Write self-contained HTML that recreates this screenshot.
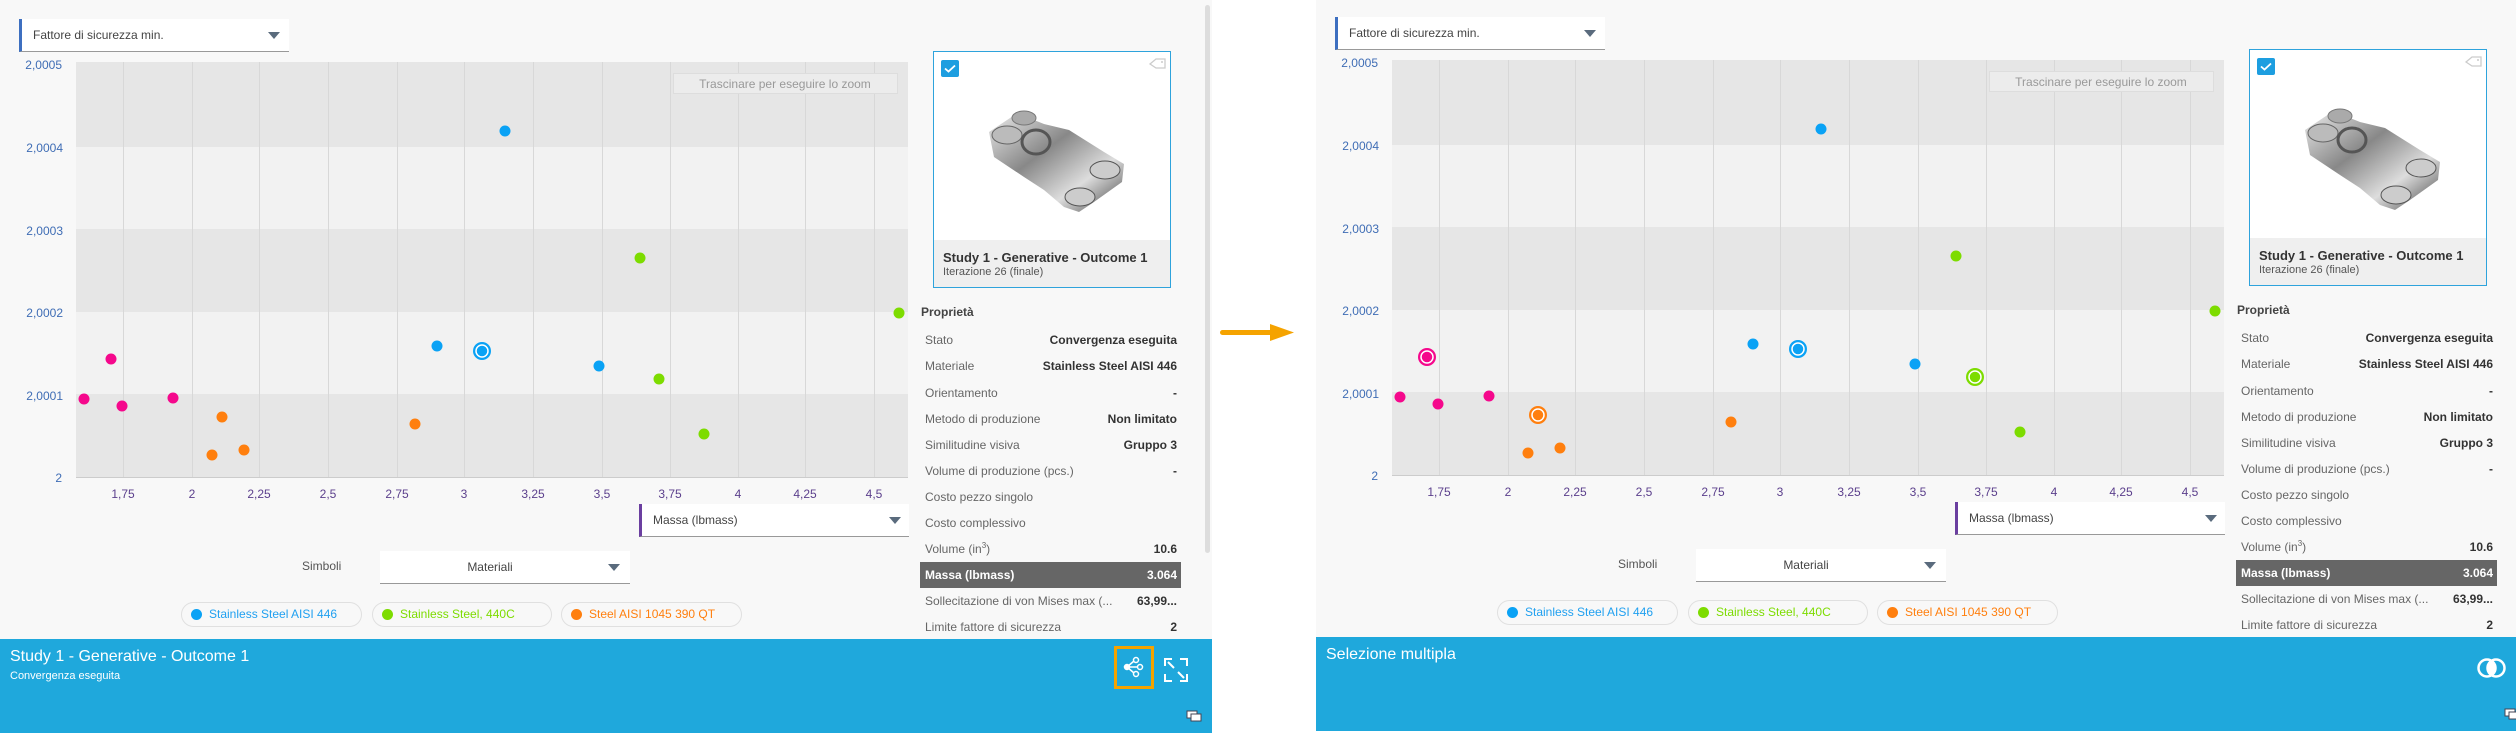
<!DOCTYPE html>
<html><head><meta charset="utf-8"><style>
*{margin:0;padding:0;box-sizing:border-box}
body{width:2516px;height:729px;background:#fff;position:relative;overflow:hidden;font-family:"Liberation Sans",sans-serif}
.panel{position:absolute;width:1212px;height:733px;background:#f8f8f8;overflow:hidden}
.abs{position:absolute}
.dd{position:absolute;background:#fff;border-bottom:1px solid #999;font-size:12px;color:#444}
.tri{position:absolute;width:0;height:0;border-left:6px solid transparent;border-right:6px solid transparent;border-top:7px solid #5a6b7d}
.pill{position:absolute;top:602px;height:25px;border:1px solid #e0e0e0;border-radius:13px;background:#f8f8f8;font-size:12px;line-height:23px;padding-left:27px}
.pill i{position:absolute;left:9px;top:6px;width:11px;height:11px;border-radius:50%}
.row{position:absolute;left:920px;width:261px;height:26px;font-size:12px;line-height:26px;color:#666;padding:0 5px}
.row b{position:absolute;right:4px;top:0;color:#333}
.row sup{font-size:8px;line-height:0;vertical-align:5px}
.footer{position:absolute;left:0;top:639px;width:1212px;height:94px;background:#1fa8dc;color:#fff}
</style></head><body>

<!-- LEFT PANEL -->
<div class="panel" style="left:0;top:0">
  <div class="dd" style="left:19px;top:19px;width:270px;height:33px;border-left:3px solid #3d6fc0;line-height:32px;padding-left:11px">Fattore di sicurezza min.<div class="tri" style="left:246px;top:13px"></div></div>
  <svg class="abs" style="left:0;top:0" width="912" height="510">
    <rect x="76" y="62" width="832" height="85" fill="#e6e6e6"/><rect x="76" y="147" width="832" height="82" fill="#f2f2f2"/><rect x="76" y="229" width="832" height="83" fill="#e6e6e6"/><rect x="76" y="312" width="832" height="82" fill="#f2f2f2"/><rect x="76" y="394" width="832" height="83" fill="#e6e6e6"/>
    <g stroke="#d8d8d8" stroke-width="1"><line x1="123.5" y1="62" x2="123.5" y2="477"/><line x1="192.5" y1="62" x2="192.5" y2="477"/><line x1="259.5" y1="62" x2="259.5" y2="477"/><line x1="328.5" y1="62" x2="328.5" y2="477"/><line x1="397.5" y1="62" x2="397.5" y2="477"/><line x1="464.5" y1="62" x2="464.5" y2="477"/><line x1="533.5" y1="62" x2="533.5" y2="477"/><line x1="602.5" y1="62" x2="602.5" y2="477"/><line x1="670.5" y1="62" x2="670.5" y2="477"/><line x1="738.5" y1="62" x2="738.5" y2="477"/><line x1="805.5" y1="62" x2="805.5" y2="477"/><line x1="874.5" y1="62" x2="874.5" y2="477"/></g>
    <line x1="76" y1="477.5" x2="908" y2="477.5" stroke="#ccc"/>
    <g font-size="12" fill="#3f6db5" text-anchor="end"><text x="62" y="69">2,0005</text><text x="63" y="152">2,0004</text><text x="63" y="235">2,0003</text><text x="63" y="317">2,0002</text><text x="63" y="400">2,0001</text><text x="62" y="482">2</text></g>
    <g font-size="12" fill="#5b3f8c" text-anchor="middle"><text x="123" y="498">1,75</text><text x="192" y="498">2</text><text x="259" y="498">2,25</text><text x="328" y="498">2,5</text><text x="397" y="498">2,75</text><text x="464" y="498">3</text><text x="533" y="498">3,25</text><text x="602" y="498">3,5</text><text x="670" y="498">3,75</text><text x="738" y="498">4</text><text x="805" y="498">4,25</text><text x="874" y="498">4,5</text></g>
    <rect x="673.5" y="73.5" width="224" height="20" fill="#ececec" stroke="#ddd"/><text x="785" y="88" font-size="12" fill="#999" text-anchor="middle">Trascinare per eseguire lo zoom</text>
    <g fill="#0aa2f5"><circle cx="505" cy="131" r="5.5"/><circle cx="437" cy="346" r="5.5"/><circle cx="599" cy="366" r="5.5"/></g>
    <circle cx="482" cy="351" r="9" fill="#0aa2f5"/><circle cx="482" cy="351" r="6" fill="#0aa2f5" stroke="#fff" stroke-width="1.5"/>
    <g fill="#7ddc00"><circle cx="640" cy="258" r="5.5"/><circle cx="659" cy="379" r="5.5"/><circle cx="704" cy="434" r="5.5"/><circle cx="899" cy="313" r="5.5"/></g>
    <g fill="#f5088c"><circle cx="111" cy="359" r="5.5"/><circle cx="84" cy="399" r="5.5"/><circle cx="122" cy="406" r="5.5"/><circle cx="173" cy="398" r="5.5"/></g>
    <g fill="#ff7f0e"><circle cx="222" cy="417" r="5.5"/><circle cx="212" cy="455" r="5.5"/><circle cx="244" cy="450" r="5.5"/><circle cx="415" cy="424" r="5.5"/></g>
  </svg>
  <div class="dd" style="left:639px;top:504px;width:270px;height:33px;border-left:3px solid #6b3fa0;line-height:32px;padding-left:11px">Massa (lbmass)<div class="tri" style="left:247px;top:13px"></div></div>
  <div class="abs" style="left:302px;top:559px;font-size:12px;color:#555">Simboli</div>
  <div class="dd" style="left:380px;top:551px;width:250px;height:33px;line-height:32px;text-align:center;padding-right:30px">Materiali<div class="tri" style="left:228px;top:13px"></div></div>
  <div class="pill" style="left:181px;width:181px;color:#20a0f0"><i style="background:#0aa2f5"></i>Stainless Steel AISI 446</div>
  <div class="pill" style="left:372px;width:180px;color:#7ddc00"><i style="background:#7ddc00"></i>Stainless Steel, 440C</div>
  <div class="pill" style="left:561px;width:181px;color:#ff7f0e"><i style="background:#ff7f0e"></i>Steel AISI 1045 390 QT</div>

  <div class="abs" style="left:933px;top:51px;width:238px;height:237px;border:1px solid #2ea3dc;background:#fff">
    <div class="abs" style="left:7px;top:8px;width:18px;height:17px;background:#1d9ee0;border-radius:2px"><svg width="18" height="17"><path d="M4 8.5l3.5 3 6.5-6" stroke="#fff" stroke-width="1.8" fill="none"/></svg></div>
    <svg class="abs" style="left:214px;top:4px" width="20" height="16"><path d="M2 8l6-5h9v9h-9z" fill="none" stroke="#ccc" stroke-width="1.3"/><circle cx="14" cy="6" r="1" fill="#ccc"/></svg>
    <svg class="abs" style="left:50px;top:50px" width="150" height="130"><defs><linearGradient id="m" x1="0" y1="0" x2="1" y2="1"><stop offset="0" stop-color="#eee"/><stop offset=".4" stop-color="#888"/><stop offset=".7" stop-color="#ddd"/><stop offset="1" stop-color="#444"/></linearGradient></defs>
      <path d="M5 30 L35 10 L50 18 L60 22 L85 28 L120 50 L140 62 L138 80 L110 100 L95 110 L80 105 L60 88 L40 75 L10 55 Z" fill="url(#m)"/>
      <ellipse cx="23" cy="33" rx="15" ry="9" fill="#bbb" stroke="#666"/><ellipse cx="40" cy="16" rx="12" ry="7" fill="#aaa" stroke="#777"/><ellipse cx="52" cy="40" rx="14" ry="12" fill="none" stroke="#555" stroke-width="3"/><ellipse cx="121" cy="68" rx="15" ry="9" fill="#ccc" stroke="#555"/><ellipse cx="96" cy="95" rx="15" ry="9" fill="#ccc" stroke="#555"/></svg>
    <div class="abs" style="left:0;top:188px;width:236px;height:47px;background:#efefef;padding:10px 9px 0">
      <div style="font-size:13px;font-weight:bold;color:#333;line-height:15px">Study 1 - Generative - Outcome 1</div>
      <div style="font-size:11px;color:#555;line-height:14px">Iterazione 26 (finale)</div>
    </div>
  </div>
  <div class="abs" style="left:921px;top:305px;font-size:12px;font-weight:bold;color:#444">Proprietà</div>
  <div class="row" style="top:327px">Stato<b>Convergenza eseguita</b></div>
  <div class="row" style="top:353px">Materiale<b>Stainless Steel AISI 446</b></div>
  <div class="row" style="top:380px">Orientamento<b>-</b></div>
  <div class="row" style="top:406px">Metodo di produzione<b>Non limitato</b></div>
  <div class="row" style="top:432px">Similitudine visiva<b>Gruppo 3</b></div>
  <div class="row" style="top:458px">Volume di produzione (pcs.)<b>-</b></div>
  <div class="row" style="top:484px">Costo pezzo singolo</div>
  <div class="row" style="top:510px">Costo complessivo</div>
  <div class="row" style="top:536px">Volume (in<sup>3</sup>)<b>10.6</b></div>
  <div class="row" style="top:562px;background:#666;color:#fff;font-weight:bold">Massa (lbmass)<b style="color:#fff">3.064</b></div>
  <div class="row" style="top:588px">Sollecitazione di von Mises max (...<b>63,99...</b></div>
  <div class="row" style="top:614px">Limite fattore di sicurezza<b>2</b></div>
  <div class="abs" style="left:1205px;top:5px;width:5px;height:548px;background:#ddd;border-radius:3px"></div>

  <div class="footer">
    <div class="abs" style="left:10px;top:9px;font-size:16px">Study 1 - Generative - Outcome 1</div>
    <div class="abs" style="left:10px;top:31px;font-size:11px">Convergenza eseguita</div>
    <div class="abs" style="left:1114px;top:7px;width:40px;height:43px;border:3px solid #f5a300"></div>
    <svg class="abs" style="left:1119px;top:13px" width="30" height="30"><g fill="none" stroke="#fff" stroke-width="1.5"><circle cx="8" cy="15" r="2.5" fill="#fff"/><circle cx="17" cy="8" r="2.5"/><circle cx="21" cy="15" r="2.5"/><circle cx="17" cy="22" r="2.5"/><path d="M8 15L15 9M8 15h11M8 15l7 6"/></g></svg>
    <svg class="abs" style="left:1164px;top:19px" width="24" height="24"><g fill="none" stroke="#fff" stroke-width="2"><path d="M1 8V1h7M16 1h7v7M23 16v7h-7M8 23H1v-7M4 4l6 6M20 20l-6-6"/></g></svg>
    <svg class="abs" style="left:1186px;top:71px" width="16" height="12"><rect x="1" y="1" width="10" height="7" fill="#fff" stroke="#445"/><rect x="5" y="4" width="10" height="7" fill="#fff" stroke="#445"/></svg>
  </div>
</div>

<!-- ARROW -->
<svg class="abs" style="left:1218px;top:320px" width="80" height="26"><rect x="2" y="10" width="55" height="5" rx="2.5" fill="#f5a300"/><path d="M52 4L76 12.5L52 21Z" fill="#f5a300"/></svg>

<!-- RIGHT PANEL -->
<div class="panel" style="left:1316px;top:-2px">
  <div class="dd" style="left:19px;top:19px;width:270px;height:33px;border-left:3px solid #3d6fc0;line-height:32px;padding-left:11px">Fattore di sicurezza min.<div class="tri" style="left:246px;top:13px"></div></div>
  <svg class="abs" style="left:0;top:0" width="912" height="510">
    <rect x="76" y="62" width="832" height="85" fill="#e6e6e6"/><rect x="76" y="147" width="832" height="82" fill="#f2f2f2"/><rect x="76" y="229" width="832" height="83" fill="#e6e6e6"/><rect x="76" y="312" width="832" height="82" fill="#f2f2f2"/><rect x="76" y="394" width="832" height="83" fill="#e6e6e6"/>
    <g stroke="#d8d8d8" stroke-width="1"><line x1="123.5" y1="62" x2="123.5" y2="477"/><line x1="192.5" y1="62" x2="192.5" y2="477"/><line x1="259.5" y1="62" x2="259.5" y2="477"/><line x1="328.5" y1="62" x2="328.5" y2="477"/><line x1="397.5" y1="62" x2="397.5" y2="477"/><line x1="464.5" y1="62" x2="464.5" y2="477"/><line x1="533.5" y1="62" x2="533.5" y2="477"/><line x1="602.5" y1="62" x2="602.5" y2="477"/><line x1="670.5" y1="62" x2="670.5" y2="477"/><line x1="738.5" y1="62" x2="738.5" y2="477"/><line x1="805.5" y1="62" x2="805.5" y2="477"/><line x1="874.5" y1="62" x2="874.5" y2="477"/></g>
    <line x1="76" y1="477.5" x2="908" y2="477.5" stroke="#ccc"/>
    <g font-size="12" fill="#3f6db5" text-anchor="end"><text x="62" y="69">2,0005</text><text x="63" y="152">2,0004</text><text x="63" y="235">2,0003</text><text x="63" y="317">2,0002</text><text x="63" y="400">2,0001</text><text x="62" y="482">2</text></g>
    <g font-size="12" fill="#5b3f8c" text-anchor="middle"><text x="123" y="498">1,75</text><text x="192" y="498">2</text><text x="259" y="498">2,25</text><text x="328" y="498">2,5</text><text x="397" y="498">2,75</text><text x="464" y="498">3</text><text x="533" y="498">3,25</text><text x="602" y="498">3,5</text><text x="670" y="498">3,75</text><text x="738" y="498">4</text><text x="805" y="498">4,25</text><text x="874" y="498">4,5</text></g>
    <rect x="673.5" y="73.5" width="224" height="20" fill="#ececec" stroke="#ddd"/><text x="785" y="88" font-size="12" fill="#999" text-anchor="middle">Trascinare per eseguire lo zoom</text>
    <g fill="#0aa2f5"><circle cx="505" cy="131" r="5.5"/><circle cx="437" cy="346" r="5.5"/><circle cx="599" cy="366" r="5.5"/></g>
    <circle cx="482" cy="351" r="9" fill="#0aa2f5"/><circle cx="482" cy="351" r="6" fill="#0aa2f5" stroke="#fff" stroke-width="1.5"/>
    <g fill="#7ddc00"><circle cx="640" cy="258" r="5.5"/><circle cx="704" cy="434" r="5.5"/><circle cx="899" cy="313" r="5.5"/></g>
    <circle cx="659" cy="379" r="9" fill="#7ddc00"/><circle cx="659" cy="379" r="6" fill="#7ddc00" stroke="#fff" stroke-width="1.5"/>
    <g fill="#f5088c"><circle cx="84" cy="399" r="5.5"/><circle cx="122" cy="406" r="5.5"/><circle cx="173" cy="398" r="5.5"/></g>
    <circle cx="111" cy="359" r="9" fill="#f5088c"/><circle cx="111" cy="359" r="6" fill="#f5088c" stroke="#fff" stroke-width="1.5"/>
    <g fill="#ff7f0e"><circle cx="212" cy="455" r="5.5"/><circle cx="244" cy="450" r="5.5"/><circle cx="415" cy="424" r="5.5"/></g>
    <circle cx="222" cy="417" r="9" fill="#ff7f0e"/><circle cx="222" cy="417" r="6" fill="#ff7f0e" stroke="#fff" stroke-width="1.5"/>
  </svg>
  <div class="dd" style="left:639px;top:504px;width:270px;height:33px;border-left:3px solid #6b3fa0;line-height:32px;padding-left:11px">Massa (lbmass)<div class="tri" style="left:247px;top:13px"></div></div>
  <div class="abs" style="left:302px;top:559px;font-size:12px;color:#555">Simboli</div>
  <div class="dd" style="left:380px;top:551px;width:250px;height:33px;line-height:32px;text-align:center;padding-right:30px">Materiali<div class="tri" style="left:228px;top:13px"></div></div>
  <div class="pill" style="left:181px;width:181px;color:#20a0f0"><i style="background:#0aa2f5"></i>Stainless Steel AISI 446</div>
  <div class="pill" style="left:372px;width:180px;color:#7ddc00"><i style="background:#7ddc00"></i>Stainless Steel, 440C</div>
  <div class="pill" style="left:561px;width:181px;color:#ff7f0e"><i style="background:#ff7f0e"></i>Steel AISI 1045 390 QT</div>

  <div class="abs" style="left:933px;top:51px;width:238px;height:237px;border:1px solid #2ea3dc;background:#fff">
    <div class="abs" style="left:7px;top:8px;width:18px;height:17px;background:#1d9ee0;border-radius:2px"><svg width="18" height="17"><path d="M4 8.5l3.5 3 6.5-6" stroke="#fff" stroke-width="1.8" fill="none"/></svg></div>
    <svg class="abs" style="left:214px;top:4px" width="20" height="16"><path d="M2 8l6-5h9v9h-9z" fill="none" stroke="#ccc" stroke-width="1.3"/><circle cx="14" cy="6" r="1" fill="#ccc"/></svg>
    <svg class="abs" style="left:50px;top:50px" width="150" height="130"><defs><linearGradient id="m2" x1="0" y1="0" x2="1" y2="1"><stop offset="0" stop-color="#eee"/><stop offset=".4" stop-color="#888"/><stop offset=".7" stop-color="#ddd"/><stop offset="1" stop-color="#444"/></linearGradient></defs>
      <path d="M5 30 L35 10 L50 18 L60 22 L85 28 L120 50 L140 62 L138 80 L110 100 L95 110 L80 105 L60 88 L40 75 L10 55 Z" fill="url(#m2)"/>
      <ellipse cx="23" cy="33" rx="15" ry="9" fill="#bbb" stroke="#666"/><ellipse cx="40" cy="16" rx="12" ry="7" fill="#aaa" stroke="#777"/><ellipse cx="52" cy="40" rx="14" ry="12" fill="none" stroke="#555" stroke-width="3"/><ellipse cx="121" cy="68" rx="15" ry="9" fill="#ccc" stroke="#555"/><ellipse cx="96" cy="95" rx="15" ry="9" fill="#ccc" stroke="#555"/></svg>
    <div class="abs" style="left:0;top:188px;width:236px;height:47px;background:#efefef;padding:10px 9px 0">
      <div style="font-size:13px;font-weight:bold;color:#333;line-height:15px">Study 1 - Generative - Outcome 1</div>
      <div style="font-size:11px;color:#555;line-height:14px">Iterazione 26 (finale)</div>
    </div>
  </div>
  <div class="abs" style="left:921px;top:305px;font-size:12px;font-weight:bold;color:#444">Proprietà</div>
  <div class="row" style="top:327px">Stato<b>Convergenza eseguita</b></div>
  <div class="row" style="top:353px">Materiale<b>Stainless Steel AISI 446</b></div>
  <div class="row" style="top:380px">Orientamento<b>-</b></div>
  <div class="row" style="top:406px">Metodo di produzione<b>Non limitato</b></div>
  <div class="row" style="top:432px">Similitudine visiva<b>Gruppo 3</b></div>
  <div class="row" style="top:458px">Volume di produzione (pcs.)<b>-</b></div>
  <div class="row" style="top:484px">Costo pezzo singolo</div>
  <div class="row" style="top:510px">Costo complessivo</div>
  <div class="row" style="top:536px">Volume (in<sup>3</sup>)<b>10.6</b></div>
  <div class="row" style="top:562px;background:#666;color:#fff;font-weight:bold">Massa (lbmass)<b style="color:#fff">3.064</b></div>
  <div class="row" style="top:588px">Sollecitazione di von Mises max (...<b>63,99...</b></div>
  <div class="row" style="top:614px">Limite fattore di sicurezza<b>2</b></div>

  <div class="footer">
    <div class="abs" style="left:10px;top:9px;font-size:16px">Selezione multipla</div>
    <svg class="abs" style="left:1160px;top:20px" width="32" height="22"><circle cx="11" cy="11" r="8.5" fill="none" stroke="#fff" stroke-width="2.5"/><circle cx="20" cy="11" r="8.5" fill="none" stroke="#fff" stroke-width="2.5"/><path d="M15.5 4a8.5 8.5 0 0 1 0 14a8.5 8.5 0 0 1 0-14z" fill="#fff"/></svg>
    <svg class="abs" style="left:1188px;top:71px" width="16" height="12"><rect x="1" y="1" width="10" height="7" fill="#fff" stroke="#445"/><rect x="5" y="4" width="10" height="7" fill="#fff" stroke="#445"/></svg>
  </div>
</div>
</body></html>
